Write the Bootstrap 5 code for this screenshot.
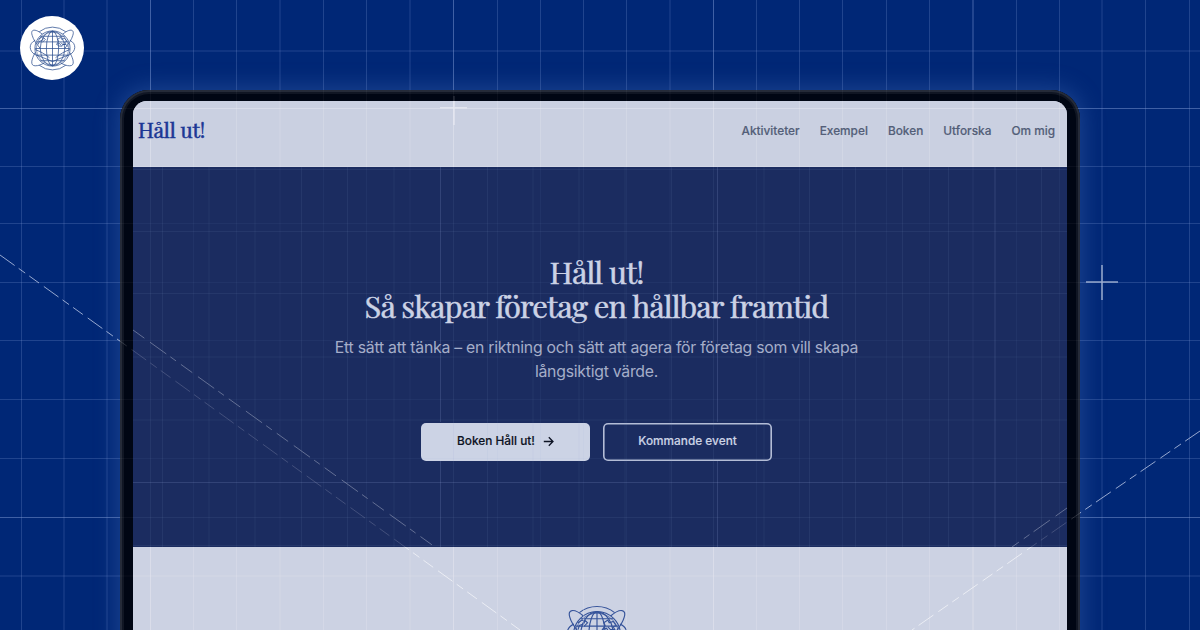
<!DOCTYPE html>
<html lang="sv">
<head>
<meta charset="utf-8">
<meta name="viewport" content="width=device-width, initial-scale=1">
<title>Håll ut!</title>
<link href="https://cdn.jsdelivr.net/npm/bootstrap@5.3.0/dist/css/bootstrap.min.css" rel="stylesheet">
<style>
body{background:#002776;font-family:Inter,"Liberation Sans",sans-serif;width:1200px;height:630px}
.serif{font-family:"Playfair Display","Liberation Serif",serif;font-weight:400;-webkit-text-stroke:.5px currentColor}
.device{width:960px;height:560px;margin-top:90px;padding:11px 13px 0;background:#000614;border-radius:29px 29px 0 0;
  box-shadow:inset 0 0 0 2px #252b39,inset 0 0 0 4px #101624,0 0 22px 3px rgba(75,120,190,.36)}
.screen{border-radius:14px 14px 0 0;background:#ccd2e3;height:549px}
.topbar{height:66px;background:#cad0e1;padding:0 12px 8px 5px}
.above{z-index:2}
.brand{font-size:21px;letter-spacing:-.2px;color:#1b3795}
.topbar .nav-link{font-size:11.85px;line-height:18px;font-weight:500;color:#535e78;padding:2px 0 0;-webkit-text-stroke:.15px currentColor}
.menu{gap:20px}
.hero{height:380px;background:#1b2c60;padding:88px 7px 0 0}
.hero h1{font-size:30.9px;line-height:33.5px;letter-spacing:-.88px;color:#cbd2e5}
.hero h1 span{display:block}
.intro{font-size:15.8px;line-height:23.5px;letter-spacing:-.25px;color:#a5aec9;width:550px;margin-top:14px}
.actions{margin-top:40px;gap:13px}
.actions .btn{width:169px;height:37.5px;border:0;border-radius:5px;font-size:11.85px;font-weight:500;padding:1px 0 0;-webkit-text-stroke:.15px currentColor}
.actions .btn-book{background:#ccd3e5;color:#0c1223}
.actions .btn-event{box-shadow:inset 0 0 0 1.6px #b4bdd6;color:#ccd3e5}
.actions svg{margin-top:-2px}
.emblem{width:76px;height:76px;margin-top:50px;margin-right:6px}
.logo{left:20px;top:16px;width:64px;height:64px;background:#fff;z-index:3}
.lines{left:0;top:0;pointer-events:none}
</style>
</head>
<body class="overflow-hidden position-relative">
<svg width="0" height="0" class="position-absolute">
  <symbol id="globe" viewBox="-28 -28 56 56">
    <g fill="none" stroke="currentColor">
      <circle r="17.3"/><circle r="16" stroke-width=".5"/>
      <path d="M-13-16.500A21 21 0 0 1 13-16.500M-13 16.500A21 21 0 0 0 13 16.500"/>
      <path d="M-10-14C-17-20-22-19-20-13C-19-9-16-5-12 0M10-14C17-20 22-19 20-13C19-9 16-5 12 0M-17 4C-21 11-22 17-17 17C-14 17-11 16-8 14M17 4C21 11 22 17 17 17C14 17 11 16 8 14"/>
      <path d="M-17-8C-24-5-23 3-17 6C-12 8-6 10 0 13M17-8C24-5 23 3 17 6C12 8 6 10 0 13M-17 1C-12 3-8 5-3 9M17 1C12 3 8 5 3 9"/>
      <path d="M0-17V17M-17 0H17M-15.500-6.500H15.500M-15.500 6.500H15.500M-12-12H12M-12 12H12"/>
      <ellipse rx="6" ry="17"/><ellipse rx="12" ry="17"/>
      <path d="M-14-9l3-2 2 1-1 2-3 1-1 3M-9-11l2 2-3 3M5-9l3-2 1 2 3-1 2 3-2 1 1 2-3 0-1 2-2-3-3 1 2-3zM8-6l2 2 3 0 2 2M5-3l3 1"/>
    </g>
  </symbol>
</svg>

<div class="logo position-absolute rounded-circle d-flex align-items-center justify-content-center">
  <svg width="57" height="57" color="#274a8c" stroke-width=".72"><use href="#globe"/></svg>
</div>

<main class="device mx-auto">
  <div class="screen overflow-hidden">
    <header class="topbar d-flex align-items-center justify-content-between">
      <a class="brand serif text-decoration-none position-relative above" href="#">Håll ut!</a>
      <nav class="nav menu position-relative above">
        <a class="nav-link" href="#">Aktiviteter</a>
        <a class="nav-link" href="#">Exempel</a>
        <a class="nav-link" href="#">Boken</a>
        <a class="nav-link" href="#">Utforska</a>
        <a class="nav-link" href="#">Om mig</a>
      </nav>
    </header>
    <section class="hero d-flex flex-column align-items-center text-center">
      <h1 class="serif mb-0 position-relative above"><span>Håll ut!</span><span>Så skapar företag en hållbar framtid</span></h1>
      <p class="intro mb-0 position-relative above">Ett sätt att tänka – en riktning och sätt att agera för företag som vill skapa långsiktigt värde.</p>
      <div class="actions d-flex">
        <a class="btn btn-book d-flex align-items-center justify-content-center gap-2" href="#">Boken Håll ut!
          <svg width="11" height="11" viewBox="0 0 11 11" fill="none" stroke="currentColor" stroke-width="1.3"><path d="M.8 5.5H10M5.8 1.2L10 5.5 5.8 9.8"/></svg></a>
        <a class="btn btn-event d-flex align-items-center justify-content-center" href="#">Kommande event</a>
      </div>
    </section>
    <div class="text-center"><svg class="emblem" color="#35539a" stroke-width=".85"><use href="#globe"/></svg></div>
  </div>
</main>

<svg class="lines position-absolute" width="1200" height="630" fill="none">
  <defs>
    <clipPath id="outside"><path clip-rule="evenodd" d="M0 0H1200V630H0ZM120 630V119A29 29 0 0 1 149 90H1051A29 29 0 0 1 1080 119V630Z"/></clipPath>
    <clipPath id="pale"><path d="M133 167V115A14 14 0 0 1 147 101H1053A14 14 0 0 1 1067 115V167ZM133 547H1067V630H133Z"/></clipPath>
    <clipPath id="dark"><path d="M133 167H1067V547H133Z"/></clipPath>
    <clipPath id="bezel"><path clip-rule="evenodd" d="M120 630V119A29 29 0 0 1 149 90H1051A29 29 0 0 1 1080 119V630ZM133 630V101H1067V630Z"/></clipPath>
    <path id="mesh" d="M21.5 0V630M64 0V630M107 0V630M150.500 0V630M193.500 0V630M236.500 0V630M280 0V630M323.500 0V630M366.500 0V630M410 0V630M453.500 0V630M497.500 0V630M540.500 0V630M583.500 0V630M626.500 0V630M670 0V630M713.500 0V630M756.500 0V630M799.500 0V630M842.500 0V630M886.500 0V630M929.500 0V630M973 0V630M1016.500 0V630M1059.500 0V630M1102 0V630M1145.500 0V630M1189.500 0V630M0 51H1200M0 108.500H1200M0 166.500H1200M0 223.500H1200M0 282.500H1200M0 340.500H1200M0 399.500H1200M0 458.500H1200M0 517.500H1200M0 576H1200"/>
    <path id="major" d="M150.500 0V630M453.500 0V630M713.500 0V630M973 0V630M0 108.500H1200M0 517.500H1200"/>
    <path id="rays" stroke-dasharray="18 5 8 5 12 6" d="M0 255L124 344 520 630M1200 431L1080 513 912 630"/>
  </defs>
  <g clip-path="url(#outside)" stroke="#7f9ad6">
    <use href="#mesh" stroke-opacity=".25"/><use href="#major" stroke-opacity=".33"/>
    <use href="#rays" stroke="#d5def5" stroke-opacity=".7"/>
  </g>
  <g clip-path="url(#pale)" stroke="#e8e8f2">
    <use href="#mesh" stroke-opacity=".28"/><use href="#major" stroke-opacity=".3"/>
    <use href="#rays" stroke="#fff" stroke-opacity=".6"/>
  </g>
  <g clip-path="url(#dark)" stroke="#8fa2d5">
    <use href="#mesh" stroke-opacity=".06"/><use href="#major" stroke-opacity=".04"/>
    <use href="#rays" stroke="#ccd" stroke-opacity=".22"/>
    <path stroke-opacity=".09" d="M162.500 167V547M209 167V547M255 167V547M301.500 167V547M347.500 167V547M394 167V547M487.500 167V547M533 167V547M579 167V547M625 167V547M671.500 167V547M764 167V547M809.500 167V547M855.500 167V547M902.500 167V547M948.500 167V547M1041.500 167V547M133 169.500H1067M133 231.500H1067M133 293.500H1067M133 357H1067M133 420H1067M133 545.500H1067"/>
    <path stroke-opacity=".2" d="M440.500 167V422M440.500 461V547M717.500 167V422M717.500 461V547M995 167V547M133 482.500H1067"/>
    <path stroke="#c5cadb" stroke-opacity=".42" stroke-dasharray="14 7 20 5 7 6" d="M133 330L435 547M1067 508L1012 547"/>
  </g>
  <use href="#mesh" clip-path="url(#bezel)" stroke="#fff" stroke-opacity=".04"/>
  <use href="#rays" clip-path="url(#bezel)" stroke="#fff" stroke-opacity=".16"/>
  <path stroke="#eceef5" stroke-opacity=".7" stroke-width="1.5" d="M440 107.700H467M454 101V125"/>
  <path stroke="#eceef5" stroke-opacity=".15" stroke-width="1.5" d="M454 96V101"/>
  <path stroke="#b9c5e0" stroke-opacity=".8" stroke-width="1.5" d="M1086 282H1118M1102 265V300"/>
</svg>
<script src="https://cdn.jsdelivr.net/npm/bootstrap@5.3.0/dist/js/bootstrap.bundle.min.js"></script>
</body>
</html>
